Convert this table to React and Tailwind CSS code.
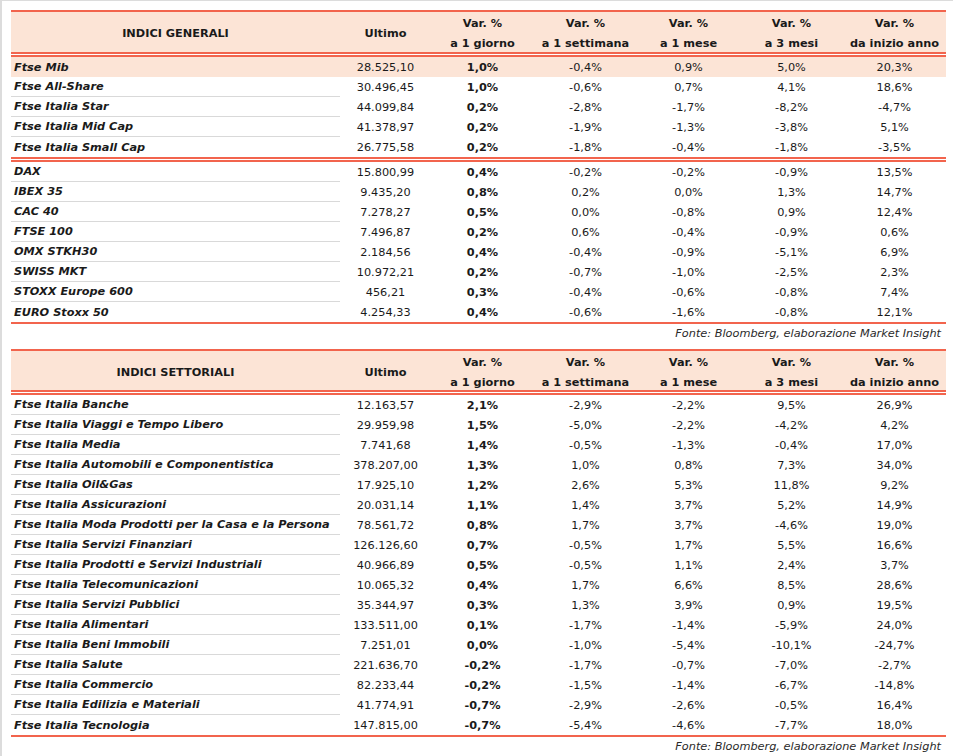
import React from 'react'

const COLS = 'grid grid-cols-[329px_91px_103px_103px_103px_103px_103px]'
const FONT = { fontFamily: '"DejaVu Sans", sans-serif' }

const GENERALI = [
  [
    ['Ftse Mib', '28.525,10', '1,0%', '-0,4%', '0,9%', '5,0%', '20,3%'],
    ['Ftse All-Share', '30.496,45', '1,0%', '-0,6%', '0,7%', '4,1%', '18,6%'],
    ['Ftse Italia Star', '44.099,84', '0,2%', '-2,8%', '-1,7%', '-8,2%', '-4,7%'],
    ['Ftse Italia Mid Cap', '41.378,97', '0,2%', '-1,9%', '-1,3%', '-3,8%', '5,1%'],
    ['Ftse Italia Small Cap', '26.775,58', '0,2%', '-1,8%', '-0,4%', '-1,8%', '-3,5%'],
  ],
  [
    ['DAX', '15.800,99', '0,4%', '-0,2%', '-0,2%', '-0,9%', '13,5%'],
    ['IBEX 35', '9.435,20', '0,8%', '0,2%', '0,0%', '1,3%', '14,7%'],
    ['CAC 40', '7.278,27', '0,5%', '0,0%', '-0,8%', '0,9%', '12,4%'],
    ['FTSE 100', '7.496,87', '0,2%', '0,6%', '-0,4%', '-0,9%', '0,6%'],
    ['OMX STKH30', '2.184,56', '0,4%', '-0,4%', '-0,9%', '-5,1%', '6,9%'],
    ['SWISS MKT', '10.972,21', '0,2%', '-0,7%', '-1,0%', '-2,5%', '2,3%'],
    ['STOXX Europe 600', '456,21', '0,3%', '-0,4%', '-0,6%', '-0,8%', '7,4%'],
    ['EURO Stoxx 50', '4.254,33', '0,4%', '-0,6%', '-1,6%', '-0,8%', '12,1%'],
  ],
]

const SETTORIALI = [
  [
    ['Ftse Italia Banche', '12.163,57', '2,1%', '-2,9%', '-2,2%', '9,5%', '26,9%'],
    ['Ftse Italia Viaggi e Tempo Libero', '29.959,98', '1,5%', '-5,0%', '-2,2%', '-4,2%', '4,2%'],
    ['Ftse Italia Media', '7.741,68', '1,4%', '-0,5%', '-1,3%', '-0,4%', '17,0%'],
    ['Ftse Italia Automobili e Componentistica', '378.207,00', '1,3%', '1,0%', '0,8%', '7,3%', '34,0%'],
    ['Ftse Italia Oil&Gas', '17.925,10', '1,2%', '2,6%', '5,3%', '11,8%', '9,2%'],
    ['Ftse Italia Assicurazioni', '20.031,14', '1,1%', '1,4%', '3,7%', '5,2%', '14,9%'],
    ['Ftse Italia Moda Prodotti per la Casa e la Persona', '78.561,72', '0,8%', '1,7%', '3,7%', '-4,6%', '19,0%'],
    ['Ftse Italia Servizi Finanziari', '126.126,60', '0,7%', '-0,5%', '1,7%', '5,5%', '16,6%'],
    ['Ftse Italia Prodotti e Servizi Industriali', '40.966,89', '0,5%', '-0,5%', '1,1%', '2,4%', '3,7%'],
    ['Ftse Italia Telecomunicazioni', '10.065,32', '0,4%', '1,7%', '6,6%', '8,5%', '28,6%'],
    ['Ftse Italia Servizi Pubblici', '35.344,97', '0,3%', '1,3%', '3,9%', '0,9%', '19,5%'],
    ['Ftse Italia Alimentari', '133.511,00', '0,1%', '-1,7%', '-1,4%', '-5,9%', '24,0%'],
    ['Ftse Italia Beni Immobili', '7.251,01', '0,0%', '-1,0%', '-5,4%', '-10,1%', '-24,7%'],
    ['Ftse Italia Salute', '221.636,70', '-0,2%', '-1,7%', '-0,7%', '-7,0%', '-2,7%'],
    ['Ftse Italia Commercio', '82.233,44', '-0,2%', '-1,5%', '-1,4%', '-6,7%', '-14,8%'],
    ['Ftse Italia Edilizia e Materiali', '41.774,91', '-0,7%', '-2,9%', '-2,6%', '-0,5%', '16,4%'],
    ['Ftse Italia Tecnologia', '147.815,00', '-0,7%', '-5,4%', '-4,6%', '-7,7%', '18,0%'],
  ],
]

const HEAD = [
  ['Var. %', 'a 1 giorno'],
  ['Var. %', 'a 1 settimana'],
  ['Var. %', 'a 1 mese'],
  ['Var. %', 'a 3 mesi'],
  ['Var. %', 'da inizio anno'],
]

function DoubleRule() {
  return <div className="h-[5px] border-t-2 border-b-2 border-[#f2644d]" />
}

function Row({ row, highlight, separator }) {
  const [name, last, day, ...rest] = row
  return (
    <div className={`${COLS} h-[20px] ${highlight ? 'bg-[#fce4d6]' : ''}`}>
      <div
        className={`flex items-center pl-[3px] pt-[2px] font-bold italic ${
          separator ? 'border-b border-[#d9d9d9]' : ''
        }`}
      >
        {name}
      </div>
      <div className="flex items-center justify-center pt-[2px]">{last}</div>
      <div className="flex items-center justify-center pt-[2px] font-bold">{day}</div>
      {rest.map((v, i) => (
        <div key={i} className="flex items-center justify-center pt-[2px]">
          {v}
        </div>
      ))}
    </div>
  )
}

function IndexTable({ title, groups, headerHeight, firstHighlighted }) {
  return (
    <div className="w-[935px]">
      <div className="h-[2px] bg-[#f2644d]" />
      <div className={`${COLS} ${headerHeight} bg-[#fce4d6] pt-[2px] font-bold leading-[20px]`}>
        <div className="flex items-center justify-center">{title}</div>
        <div className="flex items-center justify-center">Ultimo</div>
        {HEAD.map(([a, b]) => (
          <div key={b} className="flex flex-col items-center justify-center">
            <span>{a}</span>
            <span>{b}</span>
          </div>
        ))}
      </div>
      {groups.map((group, gi) => (
        <div key={gi}>
          <DoubleRule />
          {group.map((row, ri) => (
            <Row
              key={row[0]}
              row={row}
              highlight={firstHighlighted && gi === 0 && ri === 0}
              separator={ri < group.length - 1 && !(firstHighlighted && gi === 0 && ri === 0)}
            />
          ))}
        </div>
      ))}
      <div className="h-[2px] bg-[#f2644d]" />
    </div>
  )
}

function Source({ className }) {
  return (
    <div className={`flex w-[935px] items-center justify-end pr-[5px] pt-[2px] italic text-[#2a2a2a] ${className}`}>
      Fonte: Bloomberg, elaborazione Market Insight
    </div>
  )
}

export default function App() {
  return (
    <div
      style={FONT}
      className="h-[756px] w-[953px] overflow-hidden border-t border-l-2 border-[#dcdcdc] bg-white pt-[9px] pl-[9px] text-[11.3px] text-[#1a1a1a]"
    >
      <IndexTable title="INDICI GENERALI" groups={GENERALI} headerHeight="h-[40px]" firstHighlighted />
      <Source className="h-[18px] mb-[7px]" />
      <IndexTable title="INDICI SETTORIALI" groups={SETTORIALI} headerHeight="h-[39px]" />
      <Source className="h-[18px]" />
    </div>
  )
}
